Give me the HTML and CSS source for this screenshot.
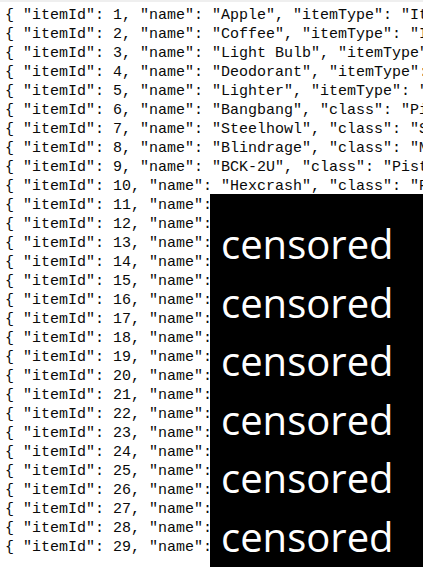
FILE: index.html
```html
<!DOCTYPE html>
<html>
<head>
<meta charset="utf-8">
<link rel="stylesheet" href="styles.css">
</head>
<body>
<div class="topbar"></div>
<div class="viewer">
<div class="code">
<div class="ln">{ "itemId": 1, "name": "Apple", "itemType": "It</div>
<div class="ln">{ "itemId": 2, "name": "Coffee", "itemType": "I</div>
<div class="ln">{ "itemId": 3, "name": "Light Bulb", "itemType"</div>
<div class="ln">{ "itemId": 4, "name": "Deodorant", "itemType":</div>
<div class="ln">{ "itemId": 5, "name": "Lighter", "itemType": "</div>
<div class="ln">{ "itemId": 6, "name": "Bangbang", "class": "Pi</div>
<div class="ln">{ "itemId": 7, "name": "Steelhowl", "class": "S</div>
<div class="ln">{ "itemId": 8, "name": "Blindrage", "class": "M</div>
<div class="ln">{ "itemId": 9, "name": "BCK-2U", "class": "Pist</div>
<div class="ln">{ "itemId": 10, "name": "Hexcrash", "class": "P</div>
<div class="ln">{ "itemId": 11, "name":</div>
<div class="ln">{ "itemId": 12, "name":</div>
<div class="ln">{ "itemId": 13, "name":</div>
<div class="ln">{ "itemId": 14, "name":</div>
<div class="ln">{ "itemId": 15, "name":</div>
<div class="ln">{ "itemId": 16, "name":</div>
<div class="ln">{ "itemId": 17, "name":</div>
<div class="ln">{ "itemId": 18, "name":</div>
<div class="ln">{ "itemId": 19, "name":</div>
<div class="ln">{ "itemId": 20, "name":</div>
<div class="ln">{ "itemId": 21, "name":</div>
<div class="ln">{ "itemId": 22, "name":</div>
<div class="ln">{ "itemId": 23, "name":</div>
<div class="ln">{ "itemId": 24, "name":</div>
<div class="ln">{ "itemId": 25, "name":</div>
<div class="ln">{ "itemId": 26, "name":</div>
<div class="ln">{ "itemId": 27, "name":</div>
<div class="ln">{ "itemId": 28, "name":</div>
<div class="ln">{ "itemId": 29, "name":</div>
</div>
<div class="censor">
<div class="censor-line">censored</div>
<div class="censor-line">censored</div>
<div class="censor-line">censored</div>
<div class="censor-line">censored</div>
<div class="censor-line">censored</div>
<div class="censor-line">censored</div>
</div>
</div>
</body>
</html>
```
FILE: styles.css
```css
html, body {
  margin: 0;
  padding: 0;
  background: #ffffff;
  width: 423px;
  height: 567px;
  overflow: hidden;
}
.topbar {
  height: 2px;
  background: #efefef;
}
.viewer {
  position: relative;
  height: 565px;
  overflow: hidden;
}
.code {
  display: flex;
  flex-direction: column;
  align-items: flex-start;
  padding: 4px 0 0 5px;
  font-family: "Liberation Mono", monospace;
  font-size: 15px;
  line-height: 19px;
  color: #0a0a0a;
}
.ln {
  white-space: pre;
}
.censor {
  position: absolute;
  left: 210px;
  top: 192px;
  right: 0;
  bottom: 0;
  background: #000000;
  padding: 21px 0 0 11px;
  display: flex;
  flex-direction: column;
  align-items: flex-start;
}
.censor-line {
  font-family: "Open Sans", sans-serif;
  font-size: 40px;
  line-height: 58.6px;
  color: #ffffff;
}
```
